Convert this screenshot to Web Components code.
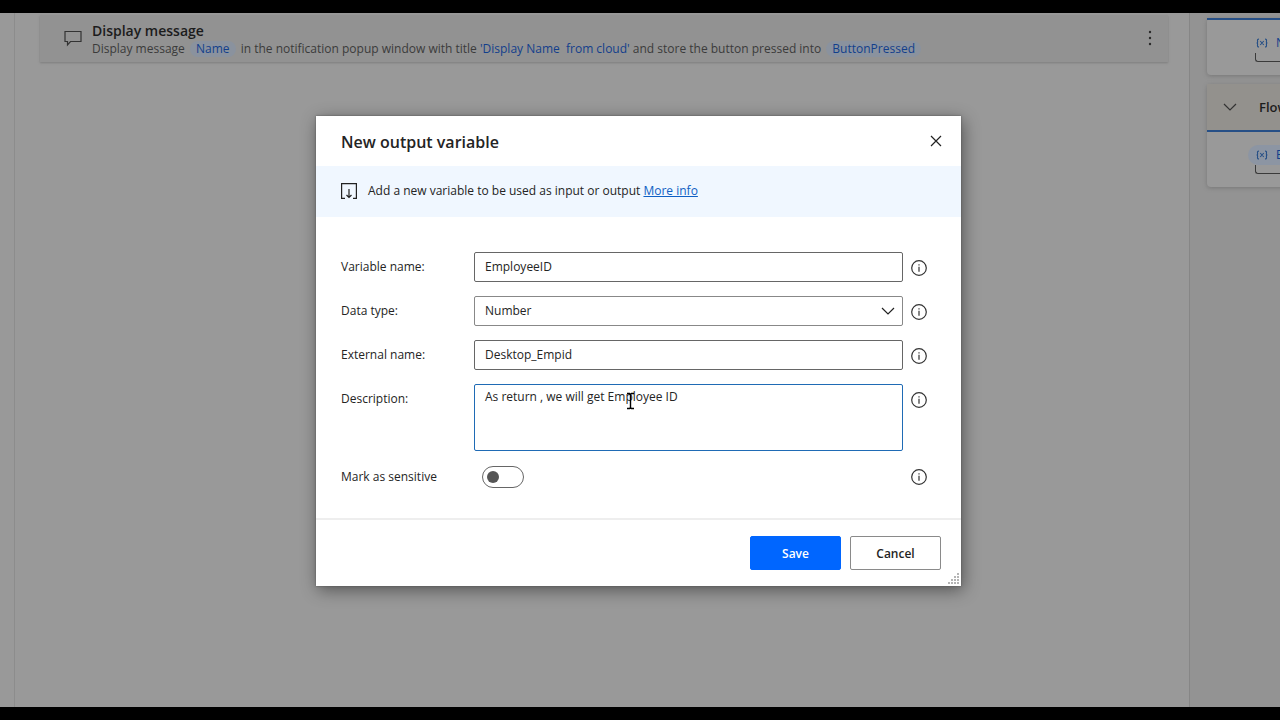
<!DOCTYPE html>
<html lang="en">
<head>
<meta charset="utf-8">
<title>New output variable</title>
<style>
  html { background: #000; }
  body {
    margin: 0;
    font-family: "Open Sans", "Noto Sans", sans-serif;
    font-size: 12px;
    line-height: 16px;
    color: #242424;
  }
</style>
</head>
<body>
<flow-designer>
  <flow-action slot="canvas" heading="Display message">
    Display message <var-token>Name</var-token> in the notification popup window with title <var-token plain>'Display Name&nbsp; from cloud'</var-token> and store the button pressed into <var-token>ButtonPressed</var-token>
  </flow-action>
  <variable-group slot="panel" name="Name"></variable-group>
  <variable-group slot="panel" heading="Flow variables" name="EmployeeID" selected></variable-group>
  <variable-dialog slot="dialog" heading="New output variable">
    <info-banner slot="banner">Add a new variable to be used as input or output</info-banner>
    <text-field label="Variable name:" value="EmployeeID"></text-field>
    <select-field label="Data type:" value="Number"></select-field>
    <text-field label="External name:" value="Desktop_Empid"></text-field>
    <area-field label="Description:" value="As return , we will get Employee ID"></area-field>
    <toggle-field label="Mark as sensitive"></toggle-field>
    <action-button slot="actions" primary>Save</action-button>
    <action-button slot="actions">Cancel</action-button>
  </variable-dialog>
</flow-designer>

<script>
const define = (name, render) => customElements.define(name, class extends HTMLElement {
  constructor() {
    super();
    this.attachShadow({ mode: "open" });
  }
  connectedCallback() {
    this.shadowRoot.innerHTML = render(this);
  }
});

define("flow-designer", () => `
  <style>
    :host { display: grid; position: relative; overflow: hidden; margin: 13px 0;
      height: calc(100vh - 26px); grid-template-columns: 15px 1fr 91px; background: #999; }
    .rail { border-right: 1px solid #8c8c8c; }
    main { padding: 2px 21px 0 25px; min-width: 0; }
    aside { background: #939393; border-left: 1px solid #868686; padding: 5px 0 0 17px;
      overflow: hidden; display: flex; flex-direction: column; gap: 9px; align-items: flex-start; }
    .overlay { position: absolute; inset: 0; display: flex; align-items: center;
      justify-content: center; padding: 0 3px 19px 0; }
  </style>
  <div class="rail"></div>
  <main><slot name="canvas"></slot></main>
  <aside><slot name="panel"></slot></aside>
  <div class="overlay"><slot name="dialog"></slot></div>`);

define("flow-action", el => `
  <style>
    :host { display: flex; align-items: center; background: #929292;
      box-shadow: 0 1px 2px #7d7d7d; padding: 7px 10px 4px 24px; color: #3b3b3b; }
    .icon { flex: none; margin: 0 10px 4px 0; }
    .text { flex: 1; min-width: 0; }
    h2 { margin: 0; font-size: 14px; line-height: 18px; font-weight: 600; color: #1c1c1c; }
    p { margin: 0; line-height: 18px; white-space: nowrap; }
    button { border: 0; background: none; padding: 0; margin-bottom: 4px; width: 16px; height: 20px; display: block; }
  </style>
  <svg class="icon" width="18" height="18" viewBox="0 0 18 18" fill="none" stroke="#333" stroke-width="1.2">
    <path d="M1 2.5h16v10H6.5L3.5 16v-3.5H1z"/></svg>
  <div class="text"><h2>${el.getAttribute("heading")}</h2><p><slot></slot></p></div>
  <button aria-label="More actions"><svg width="16" height="20" fill="#2b2b2b">
    <circle cx="8" cy="4" r="1.2"/><circle cx="8" cy="10" r="1.2"/><circle cx="8" cy="16" r="1.2"/></svg></button>`);

define("var-token", () => `
  <style>
    :host { display: inline-block; color: #123f8c; background: #8a929e; border-radius: 8px;
      padding: 0 6px; margin: 0 2px; line-height: 16px; }
    :host([plain]) { padding: 0; margin: 0; background: none; }
  </style><slot></slot>`);

define("variable-group", el => `
  <style>
    :host { display: block; flex: none; width: 240px; background: #999; border-radius: 4px;
      box-shadow: 0 1px 4px #777; }
    header { display: flex; align-items: center; gap: 22px; height: 46px; padding-left: 16px;
      background: #93918d; font-size: 13px; font-weight: 600; color: #1c1c1c; }
    .list { border-top: 2px solid #264f86; padding: 13px 0 13px 41px; }
    .item { display: flex; align-items: center; gap: 8px; height: 20px; padding-left: 8px;
      border-radius: 10px; color: #123f8c; }
    :host([selected]) .item { background: #8c95a3; }
    .edit { height: 8px; margin-left: 7px; border: solid #3a3a3a; border-width: 0 0 1px 1px;
      border-radius: 0 0 0 3px; }
  </style>
  ${el.hasAttribute("heading") ? `<header>
    <svg width="14" height="14" viewBox="0 0 14 14" fill="none" stroke="#333" stroke-width="1.2"><path d="M1 4l6 6 6-6"/></svg>
    <span>${el.getAttribute("heading")}</span></header>` : ""}
  <div class="list"><div class="item">
    <svg width="12" height="12" viewBox="0 0 12 12" fill="none" stroke="#264f86" stroke-width="1.1">
      <path d="M3 2Q1 2 1.6 4.5Q1.8 6 .6 6Q1.8 6 1.6 7.5Q1 10 3 10M9 2Q11 2 10.4 4.5Q10.2 6 11.4 6Q10.2 6 10.4 7.5Q11 10 9 10M4.2 4l3.6 4M7.8 4L4.2 8"/></svg>
    <span>${el.getAttribute("name")}</span></div><div class="edit"></div></div>`);

define("variable-dialog", el => `
  <style>
    :host { display: block; position: relative; width: min(645px, 100%); background: #fff;
      box-shadow: 0 0 2px #555, 2px 4px 16px rgba(0,0,0,.45); }
    header { display: flex; align-items: center; justify-content: space-between; height: 50px;
      padding: 0 18px 0 25px; }
    h1 { margin: 0; padding-top: 2px; font-size: 16px; line-height: 22px; font-weight: 600; color: #242424; }
    .close { border: 0; background: none; padding: 0; width: 14px; height: 14px; display: block; }
    form { display: flex; flex-direction: column; gap: 14px; padding: 35px 34px 29px 25px; }
    footer { display: flex; justify-content: flex-end; gap: 9px; border-top: 2px solid #eee;
      padding: 16px 20px; }
    .grip { position: absolute; right: 1px; bottom: 1px; }
  </style>
  <section role="dialog" aria-labelledby="title">
    <header><h1 id="title">${el.getAttribute("heading")}</h1>
      <button class="close" aria-label="Close"><svg width="14" height="14" fill="none" stroke="#222" stroke-width="1.2"><path d="M2 2l10 10M12 2L2 12"/></svg></button>
    </header>
    <slot name="banner"></slot>
    <form><slot></slot></form>
    <footer><slot name="actions"></slot></footer>
  </section>
  <svg class="grip" width="12" height="12" fill="#b5b5b5"><path d="M9 0h2v2H9zM6 3h2v2H6zM9 3h2v2H9zM3 6h2v2H3zM6 6h2v2H6zM9 6h2v2H9zM0 9h2v2H0zM3 9h2v2H3zM6 9h2v2H6zM9 9h2v2H9z"/></svg>`);

define("info-banner", () => `
  <style>
    :host { display: flex; align-items: center; gap: 11px; height: 51px; padding: 0 25px;
      background: #f0f7ff; }
    svg { flex: none; }
    a { color: #0f5fc4; text-decoration: underline; }
  </style>
  <svg width="16" height="16" viewBox="0 0 16 16" fill="none" stroke="#222" stroke-width="1.2">
    <path d="M4 15.4H.6V.6h14.8v14.8H12M8 6v8.5M5.5 12L8 14.5 10.5 12"/></svg>
  <span><slot></slot> <a href="#">More info</a></span>`);

const defineField = (name, css, control) => define(name, el => `
  <style>
    :host { display: grid; grid-template-columns: 133px 1fr 16px; align-items: start; }
    label { line-height: 30px; }
    .control { position: relative; margin-right: 8px; }
    input, select, textarea { display: block; box-sizing: border-box; width: 100%; height: 30px;
      margin: 0; padding: 0 10px; border: 1px solid #666; border-radius: 2px; background: #fff;
      font: inherit; color: inherit; outline: none; appearance: none; resize: none; }
    .info { display: block; border: 0; background: none; padding: 0; margin-top: 8px; width: 16px; height: 16px; }
    ${css}
  </style>
  <label for="control">${el.getAttribute("label")}</label>
  <div class="control">${control(el.getAttribute("value"))}</div>
  <button type="button" class="info" aria-label="Information"><svg width="16" height="16" viewBox="0 0 16 16">
    <circle cx="8" cy="8" r="7.3" fill="none" stroke="#333" stroke-width="1.2"/>
    <path d="M7.4 4.2h1.2v1.4H7.4zM7.4 6.7h1.2v5H7.4z" fill="#333"/></svg></button>`);

defineField("text-field", "", v => `<input id="control" type="text" value="${v}">`);

defineField("select-field", `
  select { border-color: #888; }
  svg.chevron { position: absolute; right: 8px; top: 9px; pointer-events: none; }`,
  v => `<select id="control"><option>${v}</option></select>
    <svg class="chevron" width="14" height="12" fill="none" stroke="#222" stroke-width="1.2"><path d="M1 3l6 6 6-6"/></svg>`);

defineField("area-field", `
  textarea { height: 67px; padding: 4px 10px; border-color: #1f6bb5; overflow: hidden; }
  .cursor { position: absolute; left: 152px; top: 8px; pointer-events: none; }`,
  v => `<textarea id="control">${v}</textarea>
    <svg class="cursor" width="9" height="18" viewBox="0 0 9 18" fill="none" stroke="#000" stroke-width="1.4">
      <path d="M1 1.5h2.5l1 1 1-1H8M4.5 2v14M1 16.5h2.5l1-1 1 1H8"/></svg>`);

defineField("toggle-field", `
  :host { align-items: center; }
  label { line-height: 24px; }
  input { width: 42px; height: 22px; margin-left: 8px; padding: 0 4px; border-radius: 11px;
    display: flex; align-items: center; }
  input::before { content: ""; width: 12px; height: 12px; border-radius: 6px; background: #555; }
  .info { margin-top: 0; }`,
  () => `<input id="control" type="checkbox" role="switch">`);

define("action-button", () => `
  <style>
    :host { display: block; }
    button { width: 91px; height: 34px; padding: 2px 0 0; border: 1px solid #8a8a8a; border-radius: 2px;
      background: #fff; color: #242424; font: inherit; font-weight: 600; display: block; }
    :host([primary]) button { background: #0066ff; border-color: #0066ff; color: #fff; }
  </style><button type="button"><slot></slot></button>`);
</script>
</body>
</html>
